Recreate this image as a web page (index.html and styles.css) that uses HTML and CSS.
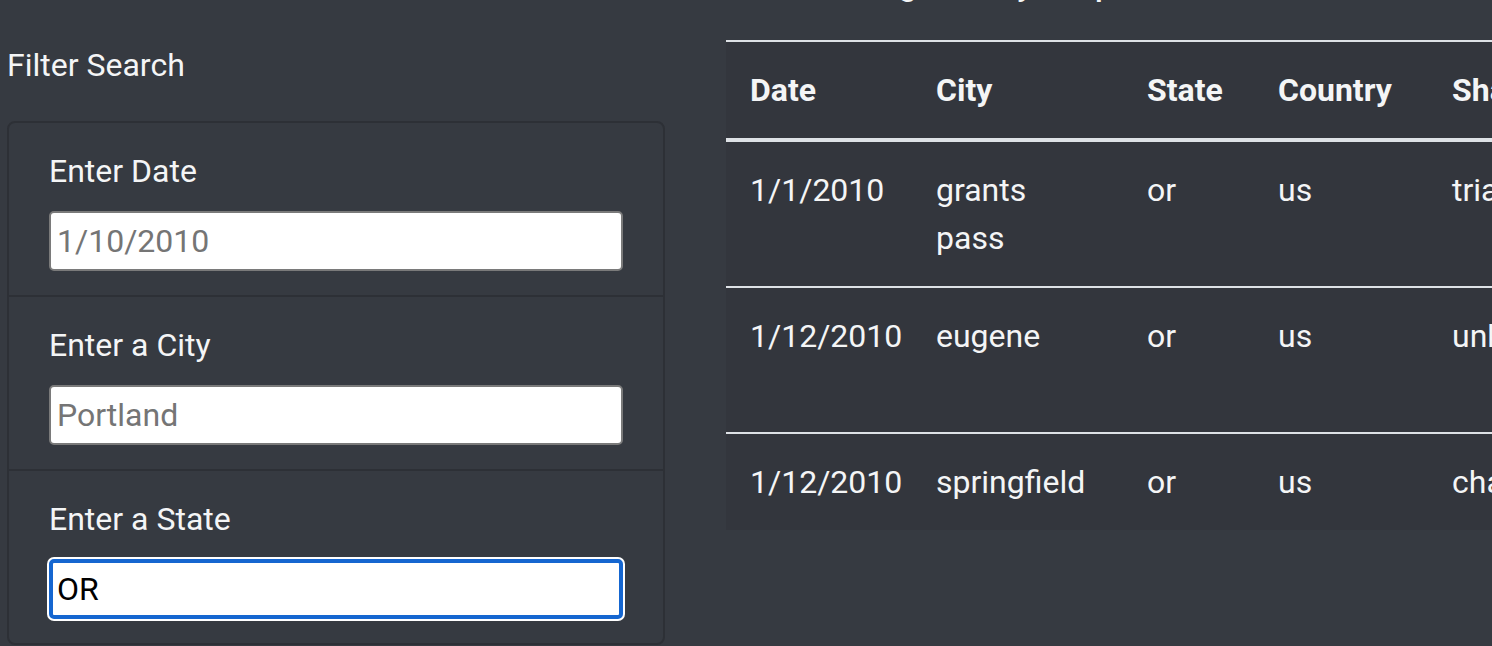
FILE: index.html
```html
<!DOCTYPE html>
<html lang="en">
<head>
<meta charset="utf-8">
<title>UFO Sightings</title>
<link rel="stylesheet" href="styles.css">
</head>
<body>
<div class="page">
  <aside class="sidebar">
    <h2 class="filter-title">Filter Search</h2>
    <ul class="filter-card">
      <li class="filter-item">
        <label class="filter-label" for="date">Enter Date</label>
        <input class="filter-input" id="date" type="text" placeholder="1/10/2010">
      </li>
      <li class="filter-item">
        <label class="filter-label" for="city">Enter a City</label>
        <input class="filter-input" id="city" type="text" placeholder="Portland">
      </li>
      <li class="filter-item">
        <label class="filter-label" for="state">Enter a State</label>
        <input class="filter-input filter-input--focus" id="state" type="text" value="OR">
      </li>
    </ul>
  </aside>
  <main class="results">
    <h3 class="results-title">Filtering Data by Shape</h3>
    <table class="ufo-table">
      <colgroup>
        <col class="c-date">
        <col class="c-city">
        <col class="c-state">
        <col class="c-country">
        <col class="c-shape">
        <col class="c-dur">
        <col class="c-comm">
      </colgroup>
      <thead>
        <tr>
          <th>Date</th>
          <th>City</th>
          <th>State</th>
          <th>Country</th>
          <th>Shape</th>
          <th>Duration</th>
          <th>Comments</th>
        </tr>
      </thead>
      <tbody>
        <tr>
          <td>1/1/2010</td>
          <td>grants pass</td>
          <td>or</td>
          <td>us</td>
          <td>triangle</td>
          <td>5 min.</td>
          <td>Three lights in a triangle formation</td>
        </tr>
        <tr>
          <td>1/12/2010</td>
          <td>eugene</td>
          <td>or</td>
          <td>us</td>
          <td>unknown</td>
          <td>10 sec.</td>
          <td>Bright object moving fast across sky</td>
        </tr>
        <tr>
          <td>1/12/2010</td>
          <td>springfield</td>
          <td>or</td>
          <td>us</td>
          <td>changing</td>
          <td>2 min.</td>
          <td>Glowing light</td>
        </tr>
      </tbody>
    </table>
  </main>
</div>
</body>
</html>
```

FILE: styles.css
```css
* { box-sizing: border-box; }

html, body {
  margin: 0;
  padding: 0;
  background: #363a41;
  overflow: hidden;
}

body {
  font-family: Roboto, "Liberation Sans", Arial, sans-serif;
  font-size: 32px;
  line-height: 48px;
  color: #f4f5f6;
}

.page {
  display: flex;
  align-items: flex-start;
  width: 2600px;
}

.sidebar {
  width: 665px;
  flex: none;
  padding-left: 7px;
}

.filter-title {
  margin: 41px 0 32px;
  font-size: 32px;
  font-weight: 400;
  line-height: 48px;
}

.filter-card {
  list-style: none;
  margin: 0;
  padding: 0;
  border: 2px solid #2d3036;
  border-radius: 8px;
  overflow: hidden;
}

.filter-item {
  display: flex;
  flex-direction: column;
  padding: 24px 40px;
  border-top: 2px solid #2d3036;
}

.filter-item:first-child {
  border-top: 0;
}

.filter-label {
  display: block;
  margin-bottom: 16px;
  font-size: 32px;
  line-height: 48px;
}

.filter-input {
  width: 100%;
  height: 60px;
  padding: 0 6px;
  border: 2px solid #7a7a7a;
  border-radius: 5px;
  background: #fff;
  font-family: inherit;
  font-size: 32px;
  color: #000;
}

.filter-input::placeholder {
  color: #757575;
}

.filter-input--focus {
  border: 4px solid #1566d0;
  padding: 0 4px;
  box-shadow: 0 0 0 2px #fff;
  outline: none;
}

.results {
  flex: none;
  margin-left: 61px;
}

.results-title {
  margin: -39px 0 31px 74px;
  font-size: 32px;
  font-weight: 500;
  line-height: 48px;
}

.ufo-table {
  table-layout: fixed;
  width: 1462px;
  border-collapse: collapse;
  background: #33363d;
  color: #f4f5f6;
}

.ufo-table th,
.ufo-table td {
  padding: 24px;
  text-align: left;
  vertical-align: top;
  border-top: 2px solid #dee2e6;
  line-height: 48px;
}

.ufo-table th {
  font-weight: 700;
  border-bottom: 4px solid #dee2e6;
  white-space: nowrap;
}

.ufo-table tbody td {
  font-weight: 400;
}

.c-date { width: 186px; }
.c-city { width: 211px; }
.c-state { width: 131px; }
.c-country { width: 174px; }
.c-shape { width: 200px; }
.c-dur { width: 180px; }
.c-comm { width: 380px; }
```
